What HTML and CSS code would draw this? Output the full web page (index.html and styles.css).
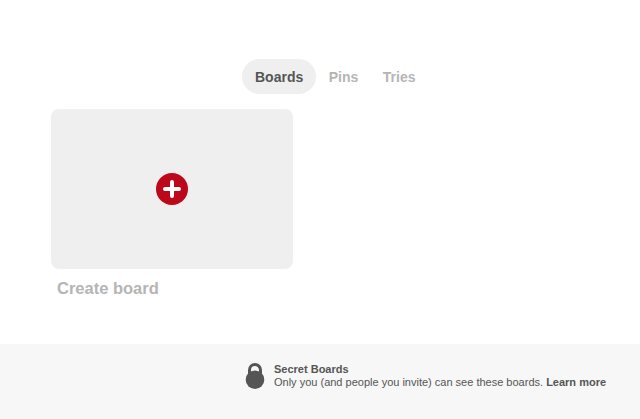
FILE: index.html
```html
<!DOCTYPE html>
<html lang="en">
<head>
<meta charset="utf-8">
<title>Boards</title>
<link rel="stylesheet" href="styles.css">
</head>
<body>
<main class="main">
  <nav class="tabs">
    <span class="tab tab-active">Boards</span>
    <span class="tab">Pins</span>
    <span class="tab">Tries</span>
  </nav>
  <section class="board">
    <div class="board-card">
      <svg class="plus" width="32" height="32" viewBox="0 0 32 32" aria-hidden="true">
        <circle cx="16" cy="16" r="16" fill="#bd081c"/>
        <path d="M16 9v14M9 16h14" stroke="#fff" stroke-width="4" stroke-linecap="round" fill="none"/>
      </svg>
    </div>
    <div class="board-label">Create board</div>
  </section>
</main>
<footer class="footer">
  <svg class="lock" width="20" height="26" viewBox="0 0 20 26" aria-hidden="true">
    <path d="M4.5 11V7a5.5 5.5 0 0 1 11 0V11" fill="none" stroke="#555" stroke-width="3"/>
    <circle cx="10" cy="16.7" r="9.3" fill="#555"/>
  </svg>
  <div class="footer-text">
    <div class="footer-title">Secret Boards</div>
    <div class="footer-line">Only you (and people you invite) can see these boards. <b class="learn">Learn more</b></div>
  </div>
</footer>
</body>
</html>
```
FILE: styles.css
```css
* { box-sizing: border-box; }
html, body { margin: 0; padding: 0; }
body {
  width: 640px;
  height: 419px;
  background: #fff;
  font-family: "Liberation Sans", Arial, sans-serif;
  display: flex;
  flex-direction: column;
  overflow: hidden;
}
.main { flex: 1; padding: 59px 0 0 51px; }
.tabs {
  display: flex;
  align-items: center;
  height: 35px;
  margin-left: 191px;
  gap: 0.5px;
}
.tab {
  padding: 1px 12px 0;
  height: 35px;
  line-height: 35px;
  border-radius: 18px;
  font-size: 14px;
  font-weight: 700;
  color: #b5b5b5;
}
.tab-active { padding: 1px 13px 0; background: #efefef; color: #555; }
.board { width: 242px; margin-top: 15px; }
.board-card {
  height: 160px;
  background: #efefef;
  border-radius: 8px;
  display: flex;
  align-items: center;
  justify-content: center;
}
.board-label {
  margin: 9px 0 0 6px;
  font-size: 16.5px;
  line-height: 20px;
  font-weight: 700;
  color: #b5b5b5;
}
.footer {
  height: 75px;
  background: #f7f7f7;
  display: flex;
  align-items: flex-start;
  padding: 19px 0 0 245px;
  gap: 9px;
}
.footer-text { font-size: 11px; line-height: 12.5px; color: #555; }
.footer-title, .learn { font-weight: 700; }
```
